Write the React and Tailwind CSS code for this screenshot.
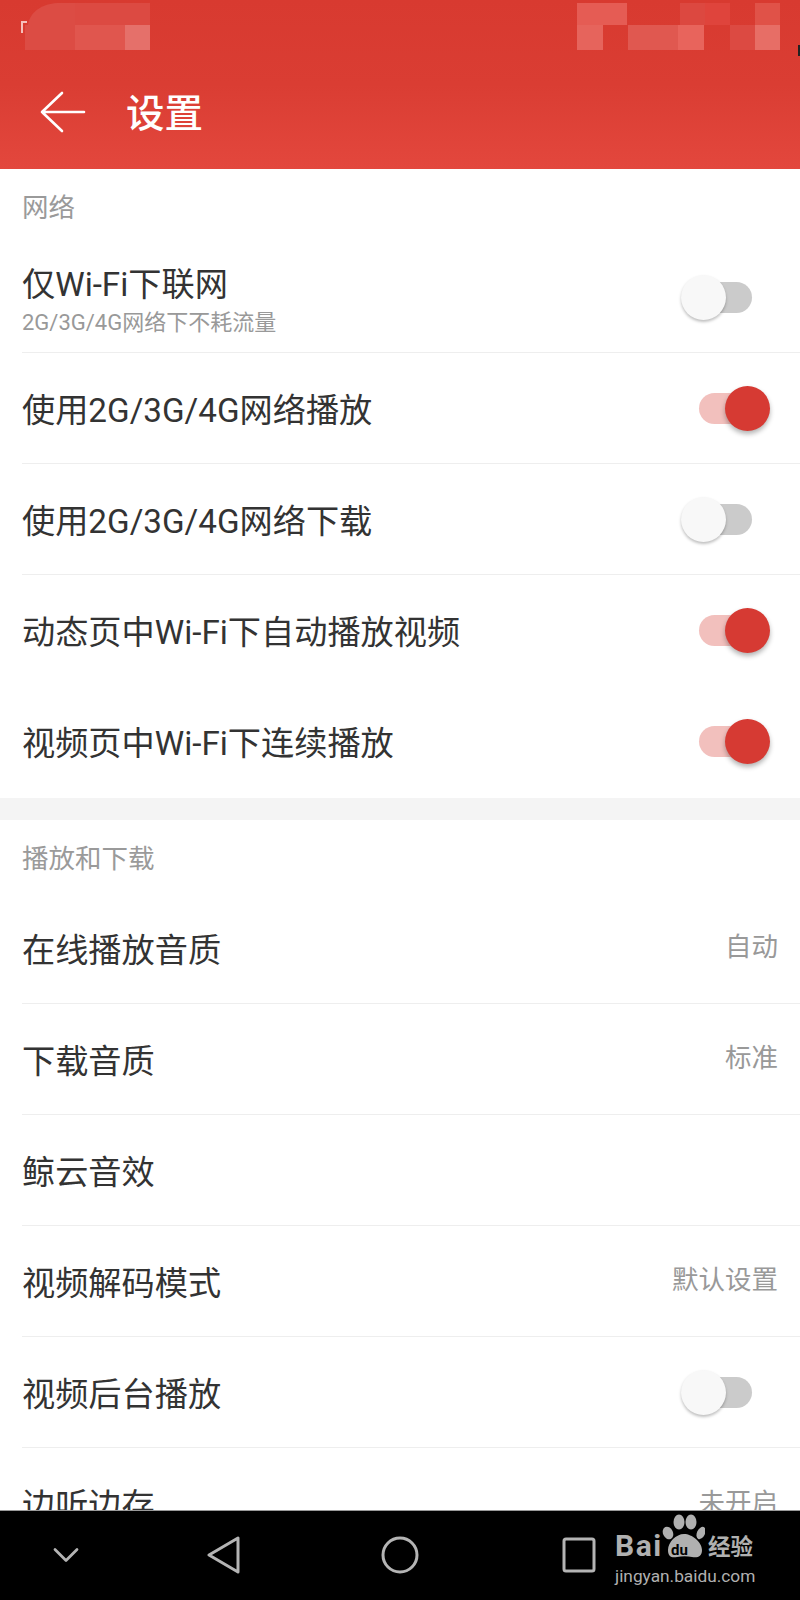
import { ChevronDown } from 'lucide-react'

const font = { cjk: 'font-["Roboto","Noto_Sans_CJK_SC",sans-serif]' }

function Toggle({ on }) {
  return (
    <div className={`relative h-[31px] w-[53px] rounded-full ${on ? 'bg-[#f2c0bd]' : 'bg-[#cbcbcb]'}`}>
      {on ? (
        <span className="absolute right-[-18px] top-[-7px] h-[45px] w-[45px] rounded-full bg-[#d63a33] shadow-[0_3px_5px_rgba(0,0,0,0.3)]" />
      ) : (
        <span className="absolute left-[-18px] top-[-7px] h-[45px] w-[45px] rounded-full bg-[#f8f8f8] shadow-[0_2px_3px_rgba(0,0,0,0.25)]" />
      )}
    </div>
  )
}

function Row({ title, sub, value, toggle, divider = true }) {
  return (
    <div className="pl-[22px]">
      <div className={`flex h-[111px] items-center justify-between ${divider ? 'border-b border-[#eeeeee]' : ''}`}>
        <div className={sub ? '' : 'pt-[5px]'}>
          <div className="text-[33.2px] leading-[40px] text-[#333333]">{title}</div>
          {sub && <div className="mb-[-6px] mt-[5px] text-[22px] leading-[26px] text-[#999999]">{sub}</div>}
        </div>
        {toggle !== undefined && (
          <div className="mr-[48px]">
            <Toggle on={toggle} />
          </div>
        )}
        {value && <div className="mb-[2px] mr-[22px] text-[26.5px] text-[#999999]">{value}</div>}
      </div>
    </div>
  )
}

function SectionLabel({ children }) {
  return <div className="flex h-[73px] items-center pl-[22px] pt-[5px] text-[26.5px] text-[#9a9a9a]">{children}</div>
}

function StatusMosaic() {
  const cells = [
    [75, 3, 75, 22, '#dc4a42'],
    [25, 25, 50, 25, '#dc4c44'],
    [75, 25, 50, 25, '#e0564e'],
    [125, 25, 25, 25, '#e5706a'],
    [577, 3, 50, 22, '#e55c54'],
    [680, 3, 25, 22, '#dc4840'],
    [705, 3, 25, 22, '#df443c'],
    [755, 3, 25, 22, '#e05248'],
    [577, 25, 26, 25, '#e6645c'],
    [628, 25, 50, 25, '#e05850'],
    [678, 25, 26, 25, '#e8645c'],
    [730, 25, 25, 25, '#dc4a42'],
    [755, 25, 25, 25, '#e76e66'],
  ]
  return (
    <svg width="800" height="70" className="block">
      <path d="M28 25 C30 10 45 3 60 3 H75 V25 Z" fill="#dc4c44" />
      {cells.map(([x, y, w, h, fill]) => (
        <rect key={`${x}-${y}`} x={x} y={y} width={w} height={h} fill={fill} />
      ))}
      <path d="M22 33 V22 H27" fill="none" stroke="#f6c0bb" strokeWidth="2" />
      <rect x="798" y="45" width="2" height="11" fill="#222" />
    </svg>
  )
}

function Watermark() {
  return (
    <div className="absolute left-[612px] top-[1514px] h-[76px] w-[150px] text-[#b0b0b0]">
      <svg width="44" height="44" viewBox="0 0 44 44" className="absolute left-[49px] top-[0px]">
        <ellipse cx="7" cy="19" rx="5" ry="6.5" transform="rotate(-25 7 19)" fill="#b0b0b0" />
        <ellipse cx="18" cy="8" rx="5.5" ry="7.5" fill="#b0b0b0" />
        <ellipse cx="30" cy="8" rx="5.5" ry="7.5" fill="#b0b0b0" />
        <ellipse cx="40" cy="19" rx="4" ry="6.5" transform="rotate(25 40 19)" fill="#b0b0b0" />
        <path d="M7 36 C7 28 15 20 23 20 C31 20 41 28 41 36 C41 43 36 44 31 43 C26 42 21 42 16 43 C11 44 7 43 7 36 Z" fill="#b0b0b0" />
      </svg>
      <span className="absolute left-[3px] top-[14px] text-[30px] font-bold leading-[36px] tracking-[1.5px]">Bai</span>
      <span className="absolute left-[59px] top-[27px] text-[15px] font-bold leading-[18px] text-black">du</span>
      <span className="absolute left-[96px] top-[19px] text-[22.5px] font-bold leading-[28px]">经验</span>
      <span className="absolute left-[3px] top-[51px] text-[17.3px] leading-[22px]">jingyan.baidu.com</span>
    </div>
  )
}

export default function App() {
  return (
    <div className={`relative flex h-[1600px] w-[800px] flex-col overflow-hidden bg-white ${font.cjk}`}>
      <header className="h-[169px] shrink-0 bg-gradient-to-b from-[#d83a30] via-[#da3d33] to-[#e3473d]">
        <StatusMosaic />
        <div className="flex h-[99px] items-center pb-[12px] pl-[40px]">
          <svg width="46" height="42" viewBox="0 0 46 42" fill="none" stroke="white" strokeWidth="2.6" strokeLinecap="round" strokeLinejoin="round" className="mt-[-3px]">
            <path d="M44 21 H2 M22 2 L2 21 L22 40" />
          </svg>
          <h1 className="ml-[40px] text-[38.5px] font-medium leading-[46px] text-white">设置</h1>
        </div>
      </header>

      <main className="min-h-0 flex-1 overflow-hidden">
        <SectionLabel>网络</SectionLabel>
        <Row title="仅Wi-Fi下联网" sub="2G/3G/4G网络下不耗流量" toggle={false} />
        <Row title="使用2G/3G/4G网络播放" toggle={true} />
        <Row title="使用2G/3G/4G网络下载" toggle={false} />
        <Row title="动态页中Wi-Fi下自动播放视频" toggle={true} divider={false} />
        <Row title="视频页中Wi-Fi下连续播放" toggle={true} divider={false} />
        <div className="mt-[1px] h-[22px] bg-[#f4f4f4]" />
        <SectionLabel>播放和下载</SectionLabel>
        <Row title="在线播放音质" value="自动" />
        <Row title="下载音质" value="标准" />
        <Row title="鲸云音效" />
        <Row title="视频解码模式" value="默认设置" />
        <Row title="视频后台播放" toggle={false} />
        <Row title="边听边存" value="未开启" divider={false} />
      </main>

      <nav className="flex h-[90px] shrink-0 items-center border-t border-[#999999] bg-black pb-[2px] text-[#b4b4b4]">
        <ChevronDown size={44} strokeWidth={1.5} className="ml-[44px]" />
        <svg width="34" height="38" viewBox="0 0 34 38" fill="none" stroke="currentColor" strokeWidth="3" strokeLinejoin="round" className="ml-[119px]">
          <path d="M31 2 V36 L2 19 Z" />
        </svg>
        <svg width="38" height="38" viewBox="0 0 38 38" fill="none" stroke="currentColor" strokeWidth="3" className="ml-[140px]">
          <circle cx="19" cy="19" r="17" />
        </svg>
        <svg width="34" height="36" viewBox="0 0 34 36" fill="none" stroke="currentColor" strokeWidth="3" strokeLinejoin="round" className="ml-[143px]">
          <rect x="2" y="2" width="30" height="32" rx="2" />
        </svg>
      </nav>
      <Watermark />
    </div>
  )
}
